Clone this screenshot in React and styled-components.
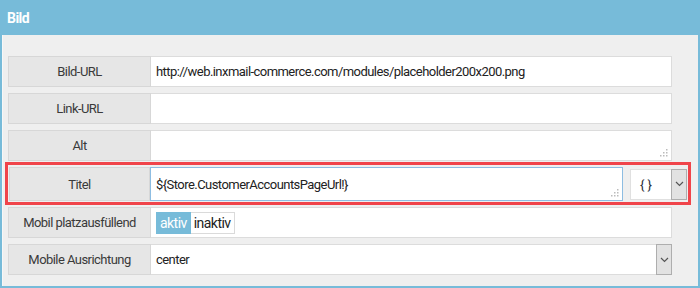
import React from 'react';
import styled, { createGlobalStyle } from 'styled-components';

const Global = createGlobalStyle`
    body {
        margin: 0;
        background: #fff;
        font-family: Roboto, "Liberation Sans", sans-serif;
    }
`

const Chevron = () => (
    <svg width="9" height="6" viewBox="0 0 9 6">
        <polyline points="1,1 4.5,4.5 8,1" fill="none" stroke="#555" strokeWidth="1.2" />
    </svg>
);

const Grip = () => (
    <GripBox width="8" height="8" viewBox="0 0 8 8">
        <rect x="6" y="0" width="1.5" height="1.5" fill="#bbb" />
        <rect x="3" y="3" width="1.5" height="1.5" fill="#bbb" />
        <rect x="6" y="3" width="1.5" height="1.5" fill="#bbb" />
        <rect x="0" y="6" width="1.5" height="1.5" fill="#bbb" />
        <rect x="3" y="6" width="1.5" height="1.5" fill="#bbb" />
        <rect x="6" y="6" width="1.5" height="1.5" fill="#bbb" />
    </GripBox>
);

export default function App() {
    return (
        <>
            <Global />
            <Panel>
                <Header>Bild</Header>
                <Body>
                    <Row>
                        <Label>Bild-URL</Label>
                        <Field>http://web.inxmail-commerce.com/modules/placeholder200x200.png</Field>
                    </Row>
                    <Row>
                        <Label>Link-URL</Label>
                        <Field />
                    </Row>
                    <Row>
                        <Label>Alt</Label>
                        <Field><Grip /></Field>
                    </Row>
                    <Highlight>
                        <TitleRow>
                            <Label>Titel</Label>
                            <Field focused>{'${Store.CustomerAccountsPageUrl!}'}<Grip /></Field>
                            <Select>
                                <SelectValue>{'{ }'}</SelectValue>
                                <SelectButton><Chevron /></SelectButton>
                            </Select>
                        </TitleRow>
                    </Highlight>
                    <Row>
                        <Label>Mobil platzausfüllend</Label>
                        <Field>
                            <Toggle>
                                <ToggleOption active>aktiv</ToggleOption>
                                <ToggleOption>inaktiv</ToggleOption>
                            </Toggle>
                        </Field>
                    </Row>
                    <Row>
                        <Label>Mobile Ausrichtung</Label>
                        <Field select>
                            center
                            <SelectButton><Chevron /></SelectButton>
                        </Field>
                    </Row>
                </Body>
            </Panel>
        </>
    );
}

const Panel = styled.div`
    width: 700px;
    height: 288px;
    box-sizing: border-box;
    border: 2px solid #77bbd9;
    border-top: none;
    display: flex;
    flex-direction: column;
    font-size: 13px;
    letter-spacing: -0.55px;
    color: #333;
`

const Header = styled.div`
    height: 35px;
    background: #77bbd9;
    color: #fff;
    font-weight: bold;
    font-size: 14px;
    display: flex;
    align-items: center;
    margin: 0 -2px;
    padding-left: 7px;
`

const Body = styled.div`
    flex: 1;
    background: #efefef;
    border-left: 1px solid #f7f7f7;
    padding: 21px 26px 0 5px;
    display: flex;
    flex-direction: column;
    gap: 6px;
`

const Row = styled.div`
    display: grid;
    grid-template-columns: 143px 1fr;
    height: 31px;
`

const Label = styled.div`
    background: #e6e6e6;
    border: 1px solid #d7d7d7;
    display: flex;
    align-items: center;
    justify-content: center;
    color: #3a3a3a;
`

const Field = styled.div`
    position: relative;
    background: #fff;
    border: 1px solid ${p => p.focused ? '#8dbde2' : '#dcdcdc'};
    border-left: ${p => p.focused ? '1px solid #8dbde2' : 'none'};
    display: flex;
    align-items: center;
    padding-left: 5px;
    color: #222;
    justify-content: ${p => p.select ? 'space-between' : 'flex-start'};
`

const GripBox = styled.svg`
    position: absolute;
    right: 3px;
    bottom: 3px;
`

const Highlight = styled.div`
    border: 3px solid #f0444a;
    margin: -5px -19px -4px -3px;
    padding: 2px 1px 1px 1px;
`

const TitleRow = styled.div`
    display: grid;
    grid-template-columns: 141px 1fr 64px;
    height: 34px;
`

const Select = styled.div`
    align-self: center;
    height: 31px;
    margin-left: 7px;
    box-sizing: border-box;
    background: #fff;
    border: 1px solid #e0e0e0;
    display: flex;
    justify-content: space-between;
`

const SelectValue = styled.div`
    display: flex;
    align-items: center;
    padding-left: 9px;
    color: #2a2f3a;
    letter-spacing: 0;
`

const SelectButton = styled.div`
    width: 14px;
    align-self: stretch;
    background: #e2e2e2;
    border: 1px solid #aeaeae;
    display: flex;
    align-items: center;
    justify-content: center;
    margin: -1px -1px -1px 0;
`

const Toggle = styled.div`
    display: flex;
    height: 22px;
`

const ToggleOption = styled.div`
    display: flex;
    align-items: center;
    padding: 0 3px;
    font-size: 14px;
    background: ${p => p.active ? '#77bbd9' : '#fff'};
    color: ${p => p.active ? '#fff' : '#222'};
    border: 1px solid ${p => p.active ? '#77bbd9' : '#dadada'};
    border-left: ${p => p.active ? '' : 'none'};
`
